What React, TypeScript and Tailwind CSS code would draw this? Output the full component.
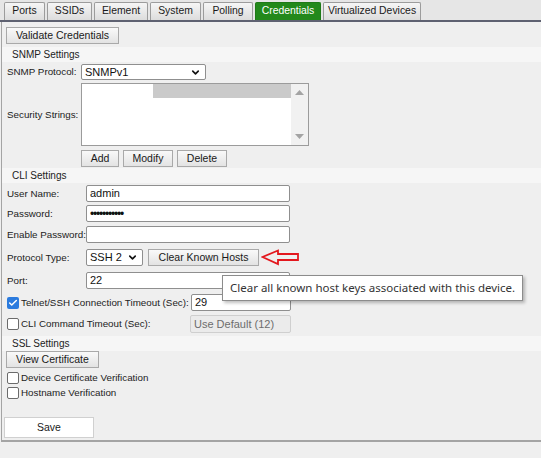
import { Check, ChevronDown } from "lucide-react";

type Tab = { label: string; width: string; active?: boolean };

const tabs: Tab[] = [
  { label: "Ports", width: "w-[41px]" },
  { label: "SSIDs", width: "w-[45px]" },
  { label: "Element", width: "w-[54px]" },
  { label: "System", width: "w-[51px]" },
  { label: "Polling", width: "w-[50px]" },
  { label: "Credentials", width: "w-[66px]", active: true },
  { label: "Virtualized Devices", width: "w-[98px]" },
];

function Button({ label, className = "" }: { label: string; className?: string }) {
  return (
    <button
      type="button"
      className={`flex h-[17px] items-center justify-center whitespace-nowrap border border-[#a9a9a9] bg-gradient-to-b from-[#f9f9f9] to-[#e3e3e3] text-[10.5px] leading-none text-[#1a1a1a] ${className}`}
    >
      {label}
    </button>
  );
}

function TextBox({ value, className = "", disabled = false }: { value: string; className?: string; disabled?: boolean }) {
  return (
    <div
      className={`flex h-[17px] items-center whitespace-nowrap rounded-[2px] border px-[3px] text-[11px] leading-none ${
        disabled ? "border-[#cfcfcf] bg-[#ebebeb] text-[#6d6d6d]" : "border-[#8f8f8f] bg-white text-[#111]"
      } ${className}`}
    >
      {value}
    </div>
  );
}

function Select({ value, className = "" }: { value: string; className?: string }) {
  return (
    <div
      className={`flex h-[16px] items-center justify-between rounded-[2px] border border-[#8f8f8f] bg-white pl-[3px] pr-[4px] text-[11px] leading-none text-[#111] ${className}`}
    >
      <span>{value}</span>
      <ChevronDown size={11} strokeWidth={3.5} className="text-[#111]" />
    </div>
  );
}

function CheckBox({ checked = false }: { checked?: boolean }) {
  return checked ? (
    <span className="flex h-[12px] w-[12px] items-center justify-center rounded-[2px] bg-[#2b7bde]">
      <Check size={10} strokeWidth={3.5} className="text-white" />
    </span>
  ) : (
    <span className="block h-[12px] w-[12px] rounded-[2px] border border-[#6b6b6b] bg-white" />
  );
}

function SectionHeader({ label, className = "" }: { label: string; className?: string }) {
  return (
    <div className={`flex h-[15px] items-center bg-[#f6f6f6] pl-[10px] text-[10px] leading-none text-[#222] ${className}`}>
      {label}
    </div>
  );
}

function Row({ label, children, className = "" }: { label: string; children: React.ReactNode; className?: string }) {
  return (
    <div className={`flex items-center ${className}`}>
      <span className="w-[80px] whitespace-nowrap pl-[5px] text-[9.8px] leading-none text-[#222]">{label}</span>
      {children}
    </div>
  );
}

function CheckRow({ label, checked = false, className = "", children }: { label: string; checked?: boolean; className?: string; children?: React.ReactNode }) {
  return (
    <div className={`flex items-center ${className}`}>
      <span className="ml-[5px]">
        <CheckBox checked={checked} />
      </span>
      <span className={`ml-[2px] whitespace-nowrap text-[9.8px] leading-none text-[#222] ${children ? "w-[170px]" : ""}`}>{label}</span>
      {children}
    </div>
  );
}

function RedArrow() {
  return (
    <svg width="40" height="17" viewBox="0 0 40 17" className="ml-[2px]">
      <polygon
        points="1.5,8 17,1.5 17,5 37,5 37,11 17,11 17,15"
        fill="none"
        stroke="#e3171d"
        strokeWidth="1.8"
        strokeLinejoin="miter"
      />
    </svg>
  );
}

export default function App() {
  return (
    <div className="relative h-[458px] w-[541px] overflow-hidden bg-[#efefef] [font-family:'Liberation_Sans',Arial,sans-serif]">
      <div className="flex h-[22px] items-end gap-[2px] border-b-2 border-[#5e6171] bg-[#e6e6e6] pl-[4px]">
        {tabs.map((tab) => (
          <div
            key={tab.label}
            className={`flex h-[18px] items-center justify-center whitespace-nowrap rounded-t-[2px] border border-b-0 text-[10.4px] leading-none ${tab.width} ${
              tab.active
                ? "border-[#1f7a17] bg-[#23891b] text-white"
                : "border-[#9c9c9c] bg-gradient-to-b from-[#f6f6f6] to-[#dcdcdc] text-[#1a1a1a]"
            }`}
          >
            {tab.label}
          </div>
        ))}
      </div>

      <div className="ml-px flex h-[420px] flex-col border-b-2 border-l border-[#a4a4a4] *:shrink-0">
        <Button label="Validate Credentials" className="ml-[4px] mt-[5px] w-[113px]" />

        <SectionHeader label="SNMP Settings" className="mt-[3px]" />
        <div className="mt-[2px] flex items-center">
          <span className="w-[79px] whitespace-nowrap pl-[5px] text-[9.8px] leading-none text-[#222]">SNMP Protocol:</span>
          <Select value="SNMPv1" className="w-[125px]" />
        </div>

        <div className="mt-[3px] flex items-center">
          <span className="w-[79px] whitespace-nowrap pl-[5px] text-[9.8px] leading-none text-[#222]">Security Strings:</span>
          <div className="flex h-[63px] w-[228px] border border-[#9b9b9b] bg-white">
            <div className="flex flex-1 flex-col">
              <div className="flex h-[14px]">
                <div className="w-[71px] bg-white" />
                <div className="flex-1 bg-[#cacaca]" />
              </div>
            </div>
            <div className="flex w-[17px] flex-col items-center justify-between bg-[#f1f1f1] py-[6px]">
              <svg width="9" height="5" viewBox="0 0 9 5">
                <polygon points="0,5 4.5,0 9,5" fill="#a3a3a3" />
              </svg>
              <svg width="9" height="5" viewBox="0 0 9 5">
                <polygon points="0,0 9,0 4.5,5" fill="#a3a3a3" />
              </svg>
            </div>
          </div>
        </div>

        <div className="ml-[79px] mt-[4px] flex gap-[4px]">
          <Button label="Add" className="w-[38px]" />
          <Button label="Modify" className="w-[50px]" />
          <Button label="Delete" className="w-[50px]" />
        </div>

        <SectionHeader label="CLI Settings" className="mt-[1px]" />
        <Row label="User Name:" className="mt-[2px]">
          <TextBox value="admin" className="ml-[4px] w-[204px]" />
        </Row>
        <Row label="Password:" className="mt-[3px]">
          <TextBox value="•••••••••••" className="ml-[4px] w-[204px] text-[12px] tracking-[-1.2px]" />
        </Row>
        <Row label="Enable Password:" className="mt-[4px]">
          <TextBox value="" className="ml-[4px] w-[204px]" />
        </Row>
        <Row label="Protocol Type:" className="mt-[6px]">
          <Select value="SSH 2" className="ml-[4px] h-[17px] w-[57px]" />
          <Button label="Clear Known Hosts" className="ml-[5px] w-[111px]" />
          <RedArrow />
        </Row>
        <Row label="Port:" className="mt-[6px]">
          <TextBox value="22" className="ml-[4px] w-[204px]" />
        </Row>
        <CheckRow label="Telnet/SSH Connection Timeout (Sec):" checked className="mt-[5px]">
          <TextBox value="29" className="w-[100px]" />
        </CheckRow>
        <CheckRow label="CLI Command Timeout (Sec):" className="mt-[4px]">
          <TextBox value="Use Default (12)" disabled className="-ml-px h-[18px] w-[101px]" />
        </CheckRow>

        <SectionHeader label="SSL Settings" className="mt-[3px]" />
        <Button label="View Certificate" className="ml-[4px] w-[93px]" />
        <CheckRow label="Device Certificate Verification" className="mt-[4px]" />
        <CheckRow label="Hostname Verification" className="mt-[3px]" />

        <button
          type="button"
          className="ml-[2px] mt-[18px] flex h-[21px] w-[90px] items-center justify-center border border-[#d0d0d0] bg-white text-[10.5px] leading-none text-[#1a1a1a]"
        >
          Save
        </button>
      </div>

      <div className="absolute left-[222px] top-[275px] flex h-[26px] w-[301px] items-center whitespace-nowrap border border-[#8c8c8c] bg-white pl-[7px] [font-family:'Noto_Sans','Open_Sans',sans-serif] text-[11.5px] leading-none text-[#333] shadow-[2px_2px_3px_rgba(0,0,0,0.25)]">
        Clear all known host keys associated with this device.
      </div>
    </div>
  );
}
